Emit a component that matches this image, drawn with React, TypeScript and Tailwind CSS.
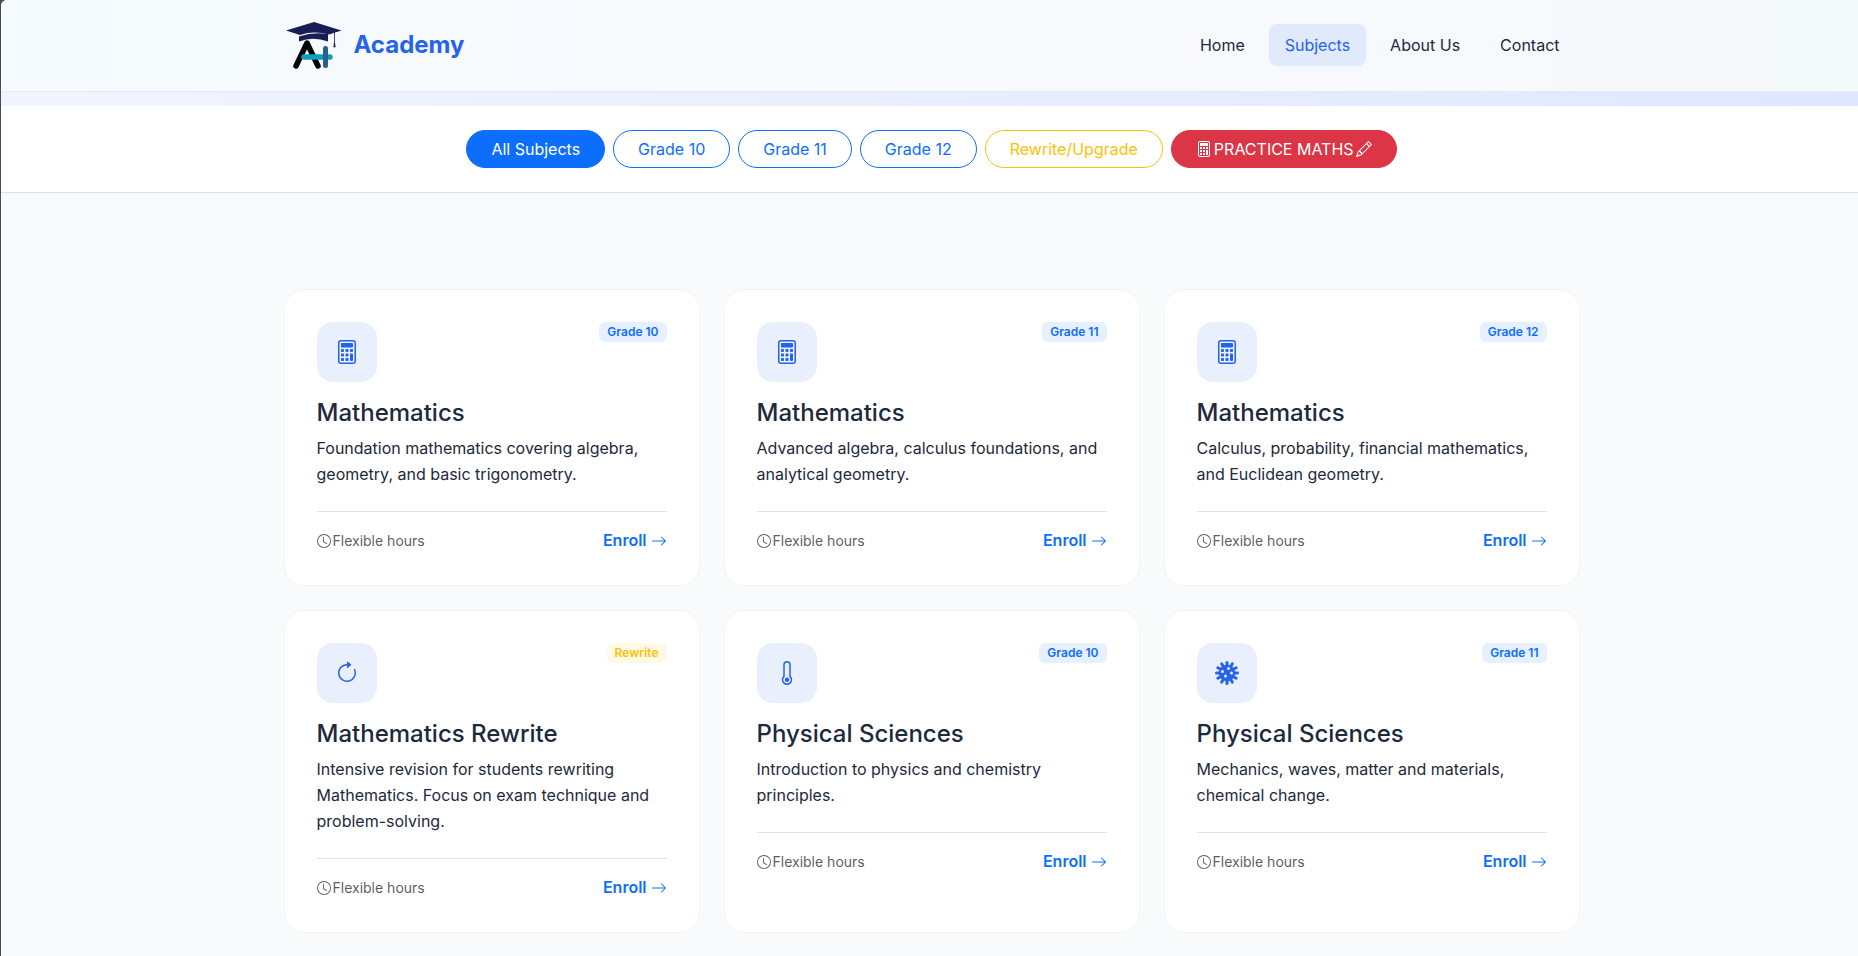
import {
  BsArrowClockwise,
  BsArrowRight,
  BsCalculator,
  BsClock,
  BsPencil,
  BsThermometer,
  BsVirus,
} from 'react-icons/bs';
import clsx from 'clsx';

const navLinks = [
  { label: 'Home', active: false },
  { label: 'Subjects', active: true },
  { label: 'About Us', active: false },
  { label: 'Contact', active: false },
];

const subjects = [
  {
    id: 1,
    icon: BsCalculator,
    title: 'Mathematics',
    grade: 'Grade 10',
    description: 'Foundation mathematics covering algebra, geometry, and basic trigonometry.',
  },
  {
    id: 2,
    icon: BsCalculator,
    title: 'Mathematics',
    grade: 'Grade 11',
    description: 'Advanced algebra, calculus foundations, and analytical geometry.',
  },
  {
    id: 3,
    icon: BsCalculator,
    title: 'Mathematics',
    grade: 'Grade 12',
    description: 'Calculus, probability, financial mathematics, and Euclidean geometry.',
  },
  {
    id: 4,
    icon: BsArrowClockwise,
    title: 'Mathematics Rewrite',
    grade: 'Rewrite',
    description:
      'Intensive revision for students rewriting Mathematics. Focus on exam technique and problem-solving.',
  },
  {
    id: 5,
    icon: BsThermometer,
    title: 'Physical Sciences',
    grade: 'Grade 10',
    description: 'Introduction to physics and chemistry principles.',
  },
  {
    id: 6,
    icon: BsVirus,
    title: 'Physical Sciences',
    grade: 'Grade 11',
    description: 'Mechanics, waves, matter and materials, chemical change.',
  },
];

const Logo = () => (
  <svg viewBox="0 0 58 50" className="h-[50px] w-[58px]" fill="none" aria-hidden="true">
    <path d="M12 46 L23 23 L34 46" stroke="#000" strokeWidth="5.5" strokeLinecap="round" strokeLinejoin="round" />
    <path d="M20 37 H46" stroke="#0e9fbc" strokeWidth="5.5" strokeLinecap="round" />
    <path d="M41.500 28.500 V45.500" stroke="#2b5f90" strokeWidth="5" strokeLinecap="round" />
    <path d="M2 10.500 L30 2 L57.500 10.500 L45 14.500 Q30 10.500 16 15 Z" fill="#1a1c55" />
    <path d="M15 16.500 Q29 11.500 44 14 V21.500 Q29 16 15 21.500 Z" fill="#1a1c55" />
    <path d="M50.500 12 V24" stroke="#1a1c55" strokeWidth="0.8" />
    <path d="M50.500 22.500 L51.200 27 H49.800 Z" fill="#1a1c55" stroke="#1a1c55" strokeWidth="0.8" />
  </svg>
);

const Header = () => (
  <header className="border-b border-[#e8ebf5] bg-linear-to-r from-[#f5fbfe] via-[#f8f9fd] to-[#f4f9fc] pl-1">
    <div className="mx-auto flex h-[91px] max-w-[1296px] items-center justify-between pb-px">
      <a href="#" className="flex items-center gap-3">
        <Logo />
        <span className="text-2xl font-bold text-[#2563eb]">Academy</span>
      </a>
      <nav className="flex items-center gap-2 px-1">
        {navLinks.map((link) => (
          <a
            key={link.label}
            href="#"
            className={clsx(
              'rounded-lg px-4 py-2 leading-[26px]',
              link.active ? 'bg-[#e1eafb] text-[#2563eb]' : 'text-slate-800',
            )}
          >
            {link.label}
          </a>
        ))}
      </nav>
    </div>
  </header>
);

const outline = 'border-[#0d6efd] text-[#0d6efd]';

const filters = [
  { label: 'All Subjects', style: 'border-[#0d6efd] bg-[#0d6efd] text-white' },
  { label: 'Grade 10', style: outline },
  { label: 'Grade 11', style: outline },
  { label: 'Grade 12', style: outline },
  { label: 'Rewrite/Upgrade', style: 'border-[#ffc107] text-[#ffc107]' },
];

const FilterBar = () => (
  <section className="border-b border-[#dee2e6] bg-white py-6 pl-1">
    <div className="flex flex-wrap justify-center gap-2">
      {filters.map((filter) => (
        <button
          key={filter.label}
          type="button"
          className={clsx('rounded-full border px-6 py-1.5 leading-6', filter.style)}
        >
          {filter.label}
        </button>
      ))}
      <button
        type="button"
        className="flex items-center gap-0.5 rounded-full border border-[#dc3545] bg-[#dc3545] px-6 py-1.5 leading-6 text-white"
      >
        <BsCalculator />
        PRACTICE MATHS
        <BsPencil />
      </button>
    </div>
  </section>
);

const SubjectCard = ({ subject }: { subject: (typeof subjects)[number] }) => {
  const Icon = subject.icon;

  return (
    <article className="rounded-[20px] border border-[#f1f3f9] bg-white p-8">
      <div className="mb-4 flex items-start justify-between">
        <div className="flex size-[60px] items-center justify-center rounded-2xl bg-[#e9effd] text-[#2563eb]">
          <Icon className="size-6" />
        </div>
        <span
          className={clsx(
            'rounded-md px-2 text-xs leading-5 font-semibold',
            subject.grade === 'Rewrite' ? 'bg-[#fff9e6] text-[#ffc107]' : 'bg-[#e7f0ff] text-[#0d6efd]',
          )}
        >
          {subject.grade}
        </span>
      </div>
      <h4 className="mb-2 text-2xl leading-[29px] font-medium text-slate-800">{subject.title}</h4>
      <p className="mb-6 leading-[26px] text-slate-800">{subject.description}</p>
      <div className="flex items-center justify-between border-t border-[#dee2e6] pt-4">
        <span className="flex items-center gap-0.5 text-sm text-[#212529bf]">
          <BsClock />
          Flexible hours
        </span>
        <a href="#" className="flex items-center gap-1 leading-[25px] font-semibold text-[#0d6efd]">
          Enroll
          <BsArrowRight />
        </a>
      </div>
    </article>
  );
};

export default function App() {
  return (
    <div className="bg-[#4c4c4f] pl-px font-['Inter',sans-serif]">
      <div className="min-h-screen overflow-hidden rounded-tl-md bg-slate-50">
        <Header />
        <div className="h-3.5 bg-linear-to-r from-[#f2f5fd] to-[#e0e7ff]" />
        <FilterBar />
        <main className="py-24 pl-1">
          <div className="mx-auto grid max-w-[1296px] grid-cols-3 gap-6">
            {subjects.map((subject) => (
              <SubjectCard key={subject.id} subject={subject} />
            ))}
          </div>
        </main>
      </div>
    </div>
  );
}
